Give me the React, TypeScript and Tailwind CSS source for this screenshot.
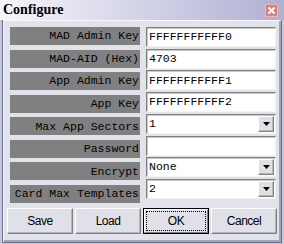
const labels = [
  "MAD Admin Key",
  "MAD-AID (Hex)",
  "App Admin Key",
  "App Key",
  "Max App Sectors",
  "Password",
  "Encrypt",
  "Card Max Templates",
];

type Field = { value: string; select?: boolean };

const fields: Field[] = [
  { value: "FFFFFFFFFFF0" },
  { value: "4703" },
  { value: "FFFFFFFFFFF1" },
  { value: "FFFFFFFFFFF2" },
  { value: "1", select: true },
  { value: "" },
  { value: "None", select: true },
  { value: "2", select: true },
];

const mono = "font-['Liberation_Mono',monospace] text-[11.5px]";
const btnFont = "font-['Liberation_Sans',sans-serif] text-[12px] tracking-[-0.5px]";

function DropButton() {
  return (
    <div className="w-[16px] h-full bg-[#e0e0e4] border border-t-white border-l-white border-b-[#808080] border-r-[#808080] shadow-[inset_-1px_-1px_0_#b8b8c0] flex items-center justify-center">
      <svg width="7" height="4" viewBox="0 0 7 4">
        <path d="M0 0h7L3.5 4z" fill="#000" />
      </svg>
    </div>
  );
}

function FieldBox({ field }: { field: Field }) {
  return (
    <div className="h-[20px] bg-white border border-t-[#808080] border-l-[#808080] border-b-[#f4f4ee] border-r-[#f4f4ee] shadow-[inset_1px_1px_0_#c8c8c0] flex items-center">
      <span className={`flex-1 pl-[2px] text-black ${mono} leading-none`}>{field.value}</span>
      {field.select && (
        <div className="h-full py-[1px] pr-[1px]">
          <DropButton />
        </div>
      )}
    </div>
  );
}

function Button({ label, focused }: { label: string; focused?: boolean }) {
  if (focused) {
    return (
      <div className="h-[26px] border border-black">
        <div className="h-full bg-[#e0e0e8] border border-t-white border-l-white border-b-[#808080] border-r-[#808080] p-[1px]">
          <div className={`h-full border border-dotted border-black flex items-center justify-center text-black ${btnFont}`}>
            {label}
          </div>
        </div>
      </div>
    );
  }
  return (
    <div
      className={`h-[26px] bg-[#e0e0e8] border border-t-white border-l-white border-b-[#808080] border-r-[#808080] shadow-[inset_-1px_-1px_0_#b4b4bc] flex items-center justify-center text-black ${btnFont}`}
    >
      {label}
    </div>
  );
}

export default function App() {
  return (
    <div className="w-[284px] h-[244px] bg-[#c6c6de] flex flex-col overflow-hidden">
      <div className="relative h-[20px] shrink-0 bg-linear-to-r from-[#f6f6fa] to-[#b0b0d4] flex items-center">
        <span className="pl-[3px] font-['Liberation_Serif',serif] font-bold text-[14px] text-black leading-none">
          Configure
        </span>
        <div className="absolute right-[6px] top-[4px] w-[13px] h-[13px] bg-[#e07c7c] border border-[#f2b4b4] flex items-center justify-center">
          <svg width="9" height="9" viewBox="0 0 9 9">
            <path d="M1.5 1.5l6 6M7.5 1.5l-6 6" stroke="#fff" strokeWidth="2" />
          </svg>
        </div>
      </div>
      <div className="flex-1 mx-[2px] mb-[1px] border-l border-r border-b border-[#6c7090]">
        <div className="h-full bg-[#e2e2ea] shadow-[inset_1px_1px_0_#f8f8fc,inset_-2px_-2px_0_#a4a4b0] px-[4px] pt-[7px]">
          <div className="flex gap-[6px] pl-[3px] pr-[1px]">
            <div className="w-[130px] h-[176px] flex flex-col justify-between">
              {labels.map((l) => (
                <div
                  key={l}
                  className={`h-[18px] bg-[#808080] flex items-center justify-end pr-[1px] text-black ${mono} leading-none`}
                >
                  {l}
                </div>
              ))}
            </div>
            <div className="w-[130px] h-[172px] flex flex-col justify-between">
              {fields.map((f, i) => (
                <FieldBox key={i} field={f} />
              ))}
            </div>
          </div>
          <div className="grid grid-cols-4 gap-[2px] mt-[5px]">
            <Button label="Save" />
            <Button label="Load" />
            <Button label="OK" focused />
            <Button label="Cancel" />
          </div>
        </div>
      </div>
    </div>
  );
}
